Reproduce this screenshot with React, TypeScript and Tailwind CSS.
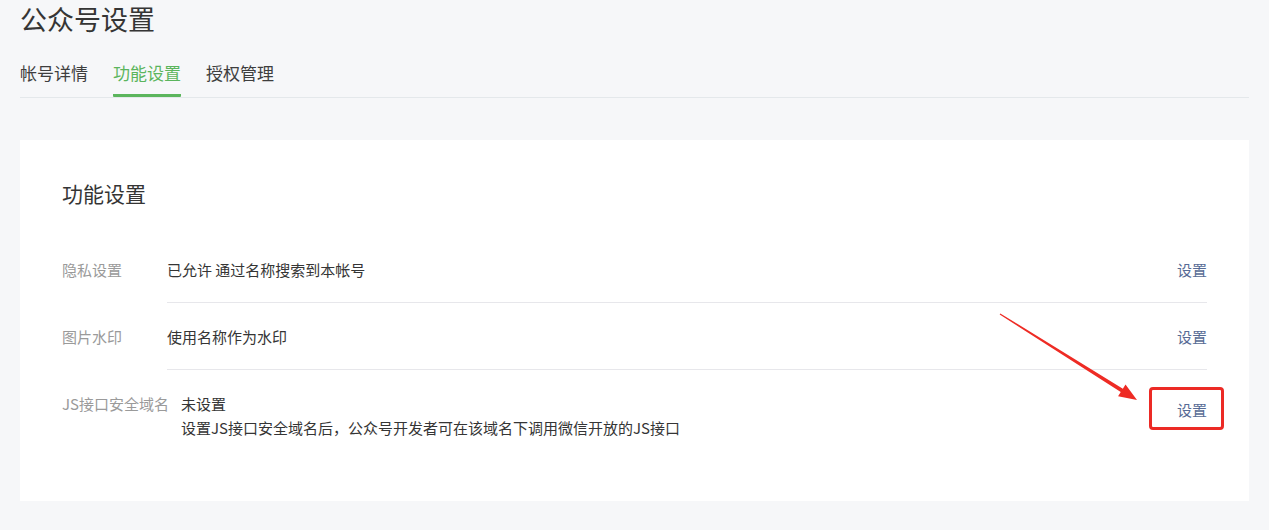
import React from "react";

const font = { fontFamily: '"Noto Sans CJK SC", "Noto Sans", sans-serif' };

function Row({
  label,
  children,
  last,
  highlight,
}: {
  label: string;
  children: React.ReactNode;
  last?: boolean;
  highlight?: boolean;
}) {
  return (
    <div className="flex text-[15px] leading-[24px]">
      <div className="min-w-[105px] shrink-0 pr-[12px] pt-[22px] text-[#9a9a9a] whitespace-nowrap">{label}</div>
      <div
        className={
          "flex flex-1 items-center justify-between pt-[22px] pb-[20px] " +
          (last ? "" : "border-b border-[#e7e7eb]")
        }
      >
        <div className="text-[#353535]">{children}</div>
        <span className={"relative text-[#576b95] " + (highlight ? "mb-[12px]" : "")}>
          设置
          {highlight && (
            <span className="pointer-events-none absolute -left-[28px] -right-[17px] -top-[11px] -bottom-[8px] rounded-[4px] border-[3px] border-[#ec2a25]" />
          )}
        </span>
      </div>
    </div>
  );
}

export default function App() {
  return (
    <div className="min-h-[530px] bg-[#f6f7f9] px-5 pb-6" style={font}>
      <h1 className="h-[37px] text-[27px] font-normal leading-[37px] text-[#353535]">公众号设置</h1>
      <div className="mt-[24px] flex gap-[25px] border-b border-[#e4e8eb] text-[17px] leading-[24px]">
        <div className="pb-[12px] text-[#3e3e3e]">帐号详情</div>
        <div className="rounded-[1px] border-b-[3px] border-[#5bb55d] pb-[9px] text-[#5bb55d]">功能设置</div>
        <div className="pb-[12px] text-[#3e3e3e]">授权管理</div>
      </div>

      <div className="relative mt-[42px] bg-white px-[42px] pt-[39px] pb-[41px]">
        <h2 className="mb-[29px] text-[21px] font-normal leading-[28px] text-[#353535]">功能设置</h2>
        <Row label="隐私设置">已允许 通过名称搜索到本帐号</Row>
        <Row label="图片水印">使用名称作为水印</Row>
        <Row label="JS接口安全域名" last highlight>
          <div>未设置</div>
          <div>设置JS接口安全域名后，公众号开发者可在该域名下调用微信开放的JS接口</div>
        </Row>

        <svg
          className="pointer-events-none absolute left-[975px] top-[170px]"
          width="150"
          height="100"
          viewBox="0 0 150 100"
        >
          <polygon
            fill="#ee2b24"
            points="5.32,3.49 127.86,78.71 130.52,74.47 142,90 123.08,86.33 125.74,82.09 4.68,4.51"
          />
        </svg>
      </div>
    </div>
  );
}
